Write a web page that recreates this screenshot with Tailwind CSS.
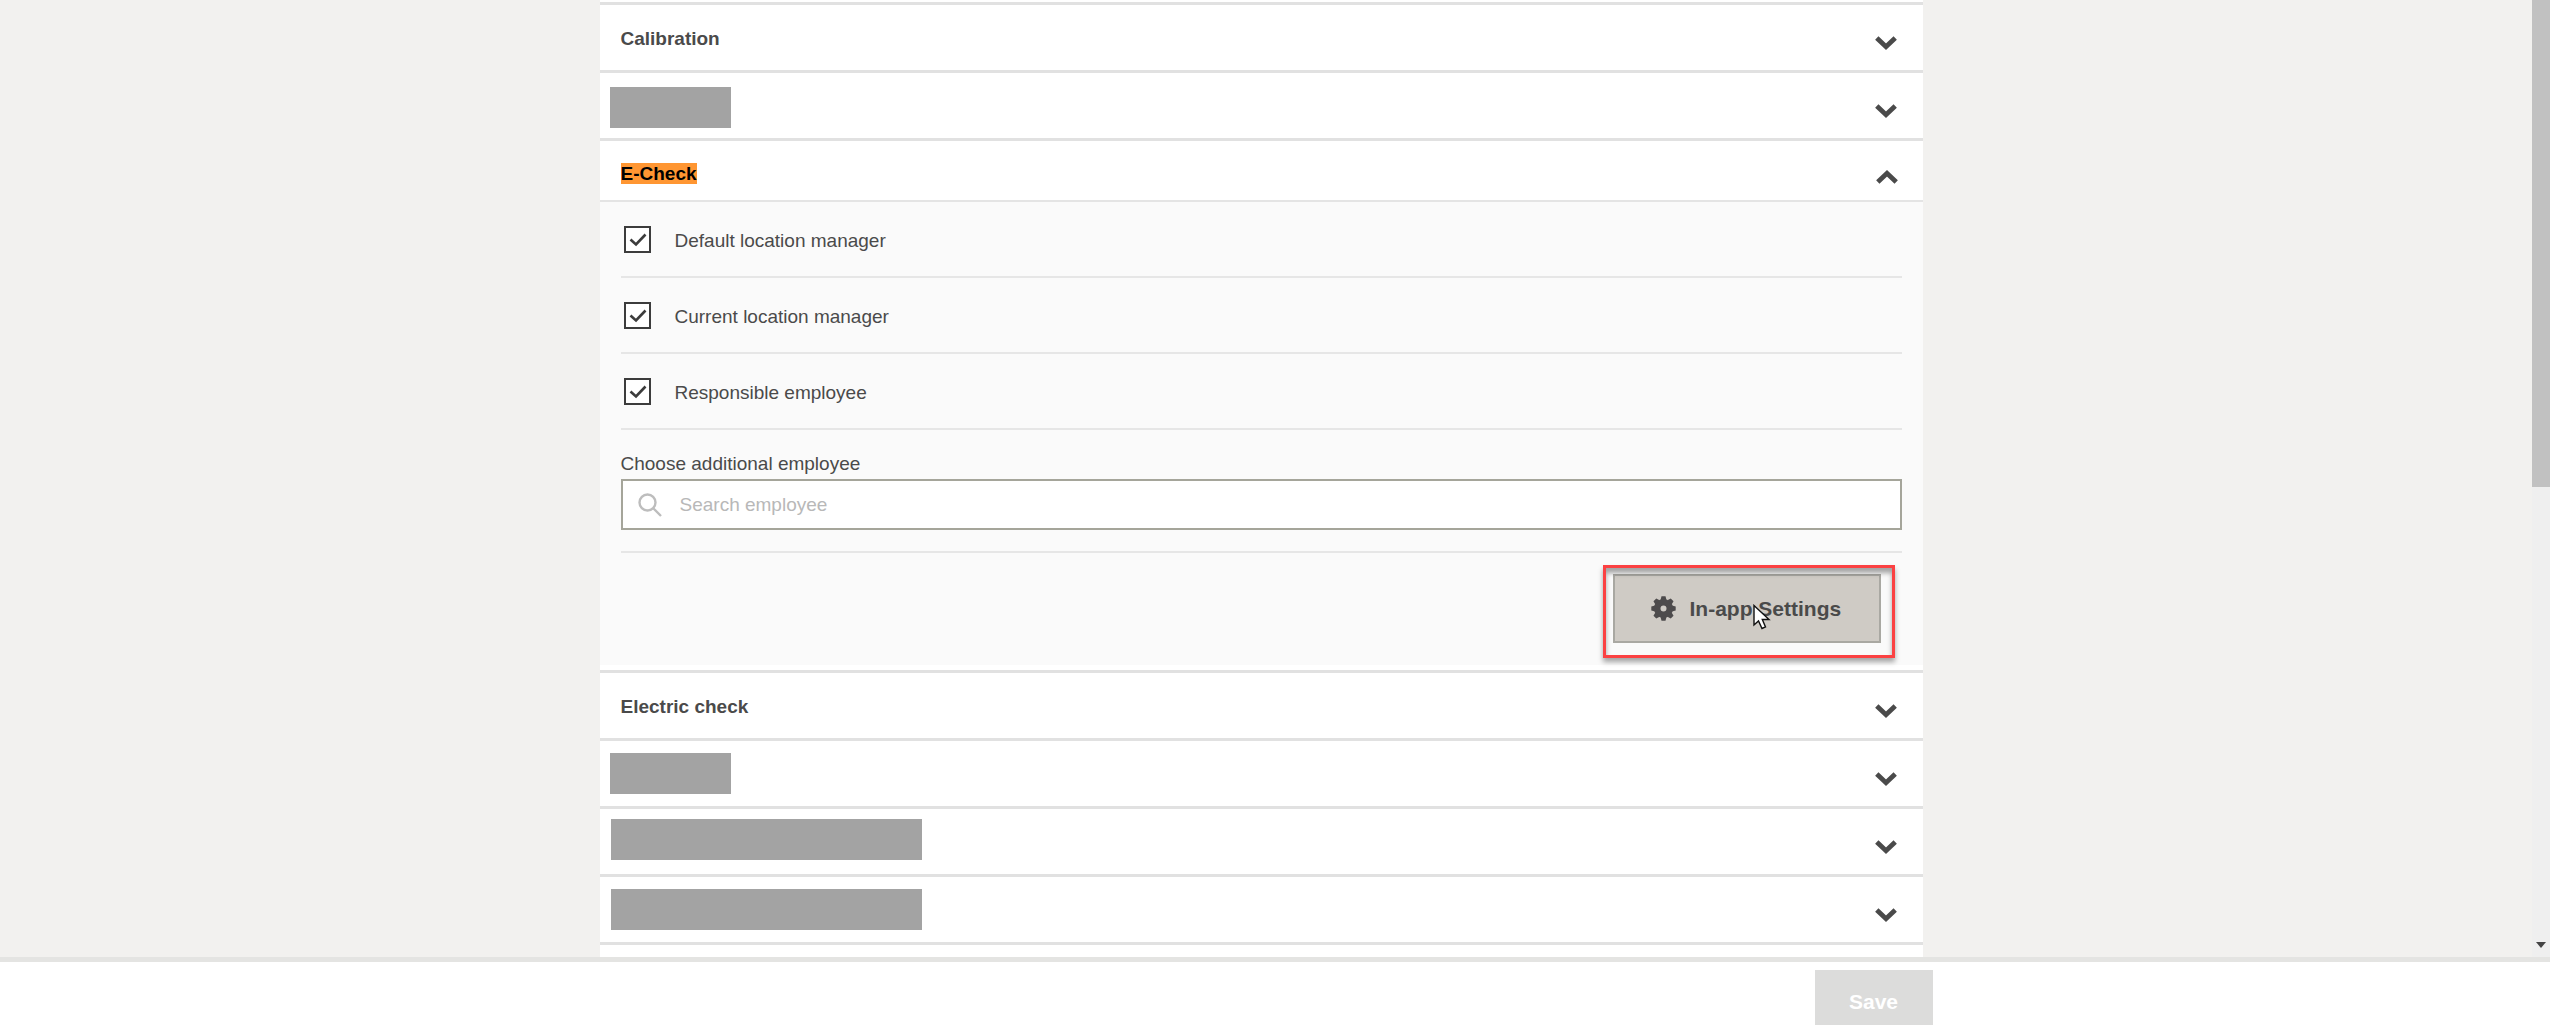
<!DOCTYPE html>
<html lang="en">
<head>
<meta charset="utf-8">
<title>Notification settings</title>
<script src="https://cdn.jsdelivr.net/npm/@tailwindcss/browser@4"></script>
</head>
<body class="h-screen flex flex-col overflow-hidden bg-white font-['Liberation_Sans',Arial,sans-serif] text-[19px] leading-[22px] text-[#4a4a4a]">

<svg class="hidden" aria-hidden="true">
  <symbol id="down" viewBox="0 0 22 15"><path d="M1.800 2 11 10.800 20.200 2" fill="none" stroke="#4a4a4a" stroke-width="4.800"/></symbol>
  <symbol id="up" viewBox="0 0 22 15"><path d="M1.800 13 11 4.200 20.200 13" fill="none" stroke="#4a4a4a" stroke-width="4.800"/></symbol>
  <symbol id="tick" viewBox="0 0 27 27"><path d="M6.500 13.500 12 18.500 21.500 8.500" fill="none" stroke="#3c3c3c" stroke-width="2.600"/></symbol>
</svg>

<div class="flex min-h-0 flex-1 bg-[#f2f1ef]">
  <main class="min-w-0 flex-1 overflow-hidden pr-2.5">
    <div class="mx-auto min-h-full w-full max-w-[1323px] bg-white pt-0.5">
      <button type="button" aria-expanded="false" class="flex h-[68px] w-full items-start justify-between border-t-3 border-[#e1e1e1] pr-[26px] pl-[21px]">
        <span class="pt-[23px] font-bold">Calibration</span>
        <svg class="mt-[31px] h-[15px] w-[22px]"><use href="#down"/></svg>
      </button>
      <button type="button" aria-expanded="false" aria-label="Hidden section" class="flex h-[68px] w-full items-start justify-between border-t-3 border-[#e1e1e1] pr-[26px] pl-2.5">
        <span class="mt-3.5 h-[41px] w-[121px] bg-[#a3a3a3]"></span>
        <svg class="mt-[31px] h-[15px] w-[22px]"><use href="#down"/></svg>
      </button>

      <section>
        <button type="button" aria-expanded="true" class="flex h-[62px] w-full items-start justify-between border-t-3 border-[#e1e1e1] pr-[25px] pl-[21px]">
          <span class="pt-[22px] font-bold"><mark class="bg-[#ff9632] text-black">E-Check</mark></span>
          <svg class="mt-7 h-[15px] w-[22px]"><use href="#up"/></svg>
        </button>
        <div class="mb-[5px] border-t-2 border-[#e4e4e4] bg-[#fafafa] px-[21px] pb-[22px]">
          <label class="flex h-[76px] items-center gap-6 border-b-2 border-[#e6e6e6] pl-[3px]">
            <span class="grid">
              <input type="checkbox" checked class="peer col-start-1 row-start-1 size-[27px] appearance-none border-2 border-[#3c3c3c] bg-white">
              <svg class="pointer-events-none invisible col-start-1 row-start-1 size-[27px] peer-checked:visible"><use href="#tick"/></svg>
            </span>
            <span class="pt-1">Default location manager</span>
          </label>
          <label class="flex h-[76px] items-center gap-6 border-b-2 border-[#e6e6e6] pl-[3px]">
            <span class="grid">
              <input type="checkbox" checked class="peer col-start-1 row-start-1 size-[27px] appearance-none border-2 border-[#3c3c3c] bg-white">
              <svg class="pointer-events-none invisible col-start-1 row-start-1 size-[27px] peer-checked:visible"><use href="#tick"/></svg>
            </span>
            <span class="pt-1">Current location manager</span>
          </label>
          <label class="flex h-[76px] items-center gap-6 border-b-2 border-[#e6e6e6] pl-[3px]">
            <span class="grid">
              <input type="checkbox" checked class="peer col-start-1 row-start-1 size-[27px] appearance-none border-2 border-[#3c3c3c] bg-white">
              <svg class="pointer-events-none invisible col-start-1 row-start-1 size-[27px] peer-checked:visible"><use href="#tick"/></svg>
            </span>
            <span class="pt-1">Responsible employee</span>
          </label>
          <div class="border-b-2 border-[#e6e6e6] pt-[23px] pb-[21px]">
            <label for="employee" class="block pb-1">Choose additional employee</label>
            <div class="flex h-[51px] items-center gap-[18px] border-2 border-[#a5a59a] bg-white pl-[15px]">
              <svg class="size-6 shrink-0" viewBox="0 0 24 24" fill="none" stroke="#bdbdbd" stroke-width="2.400"><circle cx="9.500" cy="9.500" r="8"/><path d="m15.500 15.500 7.500 7.500"/></svg>
              <input id="employee" type="text" placeholder="Search employee" class="h-full min-w-0 flex-1 outline-none placeholder:text-[#b8b8b8]">
            </div>
          </div>
          <div class="flex justify-end pt-[21px] pr-[21px]">
            <div class="relative">
              <button type="button" class="flex h-[69px] w-[268px] items-center gap-3.5 border-2 border-[#a9a8a2] bg-[#cfcbc5] pl-9 text-[21px] leading-6 font-bold">
                <svg class="size-[25px]" viewBox="-12.500 -12.500 25 25" fill="#4d4b4c">
                  <path fill-rule="evenodd" d="M0-9.500A9.500 9.500 0 1 1 0 9.500 9.500 9.500 0 1 1 0-9.500M0-3a3 3 0 1 0 0 6 3 3 0 1 0 0-6"/>
                  <path id="tooth" d="M-3-8.500-2-12.200H2L3-8.500ZM-3 8.500-2 12.200H2L3 8.500Z"/>
                  <use href="#tooth" transform="rotate(45)"/><use href="#tooth" transform="rotate(90)"/><use href="#tooth" transform="rotate(135)"/>
                </svg>
                In-app Settings
              </button>
              <div class="pointer-events-none absolute -top-[9px] -right-[14px] -bottom-[15px] -left-[10px] border-3 border-[#fb4142] shadow-[0_4px_5px_rgb(0_0_0/0.35),inset_0_5px_5px_rgb(0_0_0/0.35)]"></div>
              <svg class="pointer-events-none absolute top-[30px] left-[140px] h-[26px] w-[18px]" viewBox="0 0 18 26"><path d="M1 1.500V21L5.500 17 9 24.500 12.500 23 9.300 15.500H16Z" fill="#fff" stroke="#111" stroke-width="1.400"/></svg>
            </div>
          </div>
        </div>
      </section>

      <button type="button" aria-expanded="false" class="flex h-[68px] w-full items-start justify-between border-t-3 border-[#e1e1e1] pr-[26px] pl-[21px]">
        <span class="pt-[23px] font-bold">Electric check</span>
        <svg class="mt-[31px] h-[15px] w-[22px]"><use href="#down"/></svg>
      </button>
      <button type="button" aria-expanded="false" aria-label="Hidden section" class="flex h-[68px] w-full items-start justify-between border-t-3 border-[#e1e1e1] pr-[26px] pl-2.5">
        <span class="mt-3 h-[41px] w-[121px] bg-[#a3a3a3]"></span>
        <svg class="mt-[31px] h-[15px] w-[22px]"><use href="#down"/></svg>
      </button>
      <button type="button" aria-expanded="false" aria-label="Hidden section" class="flex h-[68px] w-full items-start justify-between border-t-3 border-[#e1e1e1] pr-[26px] pl-[11px]">
        <span class="mt-2.5 h-[41px] w-[311px] bg-[#a3a3a3]"></span>
        <svg class="mt-[31px] h-[15px] w-[22px]"><use href="#down"/></svg>
      </button>
      <button type="button" aria-expanded="false" aria-label="Hidden section" class="flex h-[68px] w-full items-start justify-between border-t-3 border-[#e1e1e1] pr-[26px] pl-[11px]">
        <span class="mt-3 h-[41px] w-[311px] bg-[#a3a3a3]"></span>
        <svg class="mt-[31px] h-[15px] w-[22px]"><use href="#down"/></svg>
      </button>
      <div class="border-t-3 border-[#e1e1e1]"></div>
    </div>
  </main>
  <div class="flex w-[18px] shrink-0 flex-col items-center justify-between bg-[#efefef] pb-[9px]" aria-hidden="true">
    <div class="h-[51.4%] w-full bg-[#c1c1c1]"></div>
    <svg class="h-[6px] w-[10px]" viewBox="0 0 10 6"><path d="M0 0H10L5 6Z" fill="#444"/></svg>
  </div>
</div>

<footer class="h-[68px] shrink-0 overflow-hidden border-t-5 border-[#e4e4e2] bg-white pt-2 pr-7">
  <div class="mx-auto flex w-full max-w-[1343px] justify-end">
    <button type="button" disabled class="w-[118px] bg-[#dcdcdb] py-5 text-[21px] leading-6 font-bold text-white">Save</button>
  </div>
</footer>
</body>
</html>
